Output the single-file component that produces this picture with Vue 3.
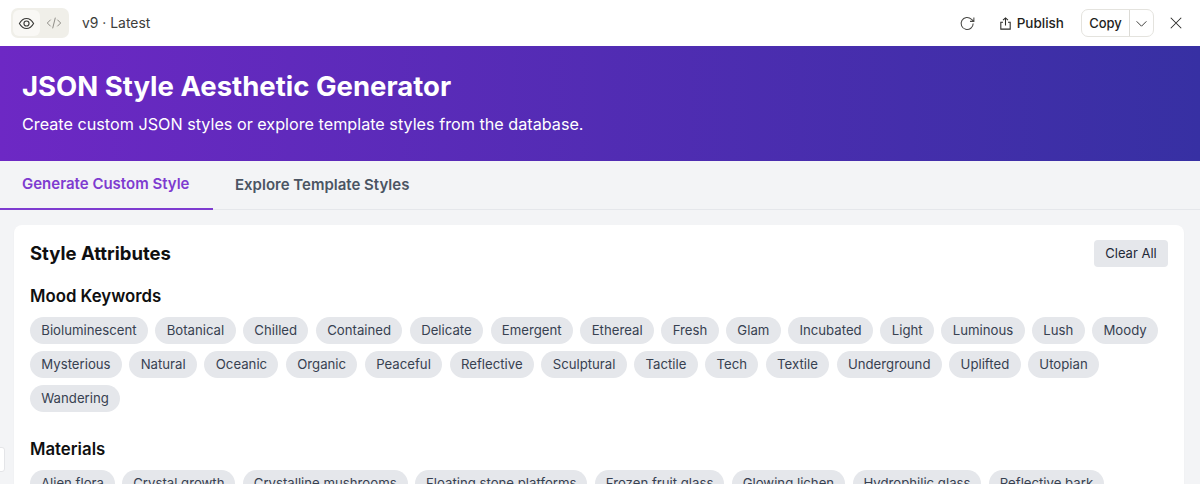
<script setup>
const mood = ['Bioluminescent','Botanical','Chilled','Contained','Delicate','Emergent','Ethereal','Fresh','Glam','Incubated','Light','Luminous','Lush','Moody','Mysterious','Natural','Oceanic','Organic','Peaceful','Reflective','Sculptural','Tactile','Tech','Textile','Underground','Uplifted','Utopian','Wandering']
const materials = ['Alien flora','Crystal growth','Crystalline mushrooms','Floating stone platforms','Frozen fruit glass','Glowing lichen','Hydrophilic glass','Reflective bark']
</script>

<template>
  <div class="page">
    <header class="topbar">
      <div class="left">
        <div class="toggle">
          <span class="tbtn active">
            <svg width="17" height="17" viewBox="0 0 24 24" fill="none" stroke="#3a3a38" stroke-width="1.6"><path d="M2 12c2.6-4.6 6-7 10-7s7.400 2.400 10 7c-2.600 4.600-6 7-10 7s-7.400-2.400-10-7z"/><circle cx="12" cy="12" r="3.600"/></svg>
          </span>
          <span class="tbtn">
            <svg width="16" height="16" viewBox="0 0 24 24" fill="none" stroke="#8f8d87" stroke-width="1.500"><path d="M7 7l-5 5 5 5M17 7l5 5-5 5M14 4l-4 16"/></svg>
          </span>
        </div>
        <span class="version">v9 · Latest</span>
      </div>
      <div class="right">
        <svg class="reload" width="17" height="17" viewBox="0 0 24 24" fill="none" stroke="#4a4a47" stroke-width="1.500"><path d="M20 12a8.500 8.500 0 1 1-2.600-6.100L21 9M21 3.500V9h-5.500"/></svg>
        <span class="publish">
          <svg width="15" height="15" viewBox="0 0 24 24" fill="none" stroke="#2b2b29" stroke-width="1.700"><path d="M12 15V3M8 6.500 12 3l4 3.500M8 10H4.500v11h15V10H16"/></svg>
          Publish
        </span>
        <div class="copy">
          <span class="copy-label">Copy</span>
          <span class="copy-arrow">
            <svg width="13" height="13" viewBox="0 0 24 24" fill="none" stroke="#3a3a38" stroke-width="1.800"><path d="M3 8l9 9 9-9"/></svg>
          </span>
        </div>
        <svg class="close" width="14" height="14" viewBox="0 0 24 24" fill="none" stroke="#2b2b29" stroke-width="1.800"><path d="M3 3l18 18M21 3 3 21"/></svg>
      </div>
    </header>

    <section class="hero">
      <h1>JSON Style Aesthetic Generator</h1>
      <p>Create custom JSON styles or explore template styles from the database.</p>
    </section>

    <nav class="tabs">
      <span class="tab on">Generate Custom Style</span>
      <span class="tab">Explore Template Styles</span>
    </nav>

    <main class="content">
      <div class="card">
        <div class="card-head">
          <h2>Style Attributes</h2>
          <button class="clear">Clear All</button>
        </div>
        <h3>Mood Keywords</h3>
        <div class="chips">
          <span v-for="c in mood" :key="c" class="chip">{{ c }}</span>
        </div>
        <h3 class="mat">Materials</h3>
        <div class="chips tight">
          <span v-for="c in materials" :key="c" class="chip">{{ c }}</span>
        </div>
      </div>
    </main>
    <div class="edge"></div>
  </div>
</template>

<style>
html, body { margin: 0; height: 484px; overflow: hidden; background: #f3f4f6; }
</style>

<style scoped>
.page { position: relative; width: 1200px; height: 484px; overflow: hidden; font-family: Inter, "Liberation Sans", sans-serif; background: #f3f4f6; }
.topbar { height: 46px; background: #fff; display: flex; align-items: center; justify-content: space-between; padding: 0 16px 0 11px; box-sizing: border-box; }
.left { display: flex; align-items: center; gap: 13px; }
.toggle { display: flex; width: 58px; height: 30px; background: #f0efe9; border-radius: 7px; padding: 2px; box-sizing: border-box; }
.tbtn { width: 27px; display: flex; align-items: center; justify-content: center; border-radius: 6px; }
.tbtn.active { background: #f9f8f5; }
.version { font-size: 13.900px; color: #3d3d3a; }
.right { display: flex; align-items: center; }
.reload { margin-right: 22px; }
.publish { display: flex; align-items: center; gap: 4px; font-size: 13.500px; font-weight: 500; color: #1f1f1d; margin-right: 17px; }
.copy { display: flex; height: 28px; width: 73px; border: 1px solid #e4e3de; border-radius: 7px; box-sizing: border-box; align-items: center; margin-right: 15px; }
.copy-label { width: 47px; text-align: center; font-size: 13px; font-weight: 500; color: #1f1f1d; border-right: 1px solid #dcdbd6; height: 100%; line-height: 26px; }
.copy-arrow { flex: 1; display: flex; align-items: center; justify-content: center; }
.close { margin-right: 1px; }
.hero { height: 115px; box-sizing: border-box; padding: 22px 22px 0; background: linear-gradient(90deg, #6d28c4 0%, #3730a3 100%); color: #fff; }
.hero h1 { margin: 0; font-size: 27.500px; line-height: 36px; font-weight: 700; }
.hero p { margin: 8px 0 0; font-size: 16.200px; line-height: 24px; }
.tabs { height: 49px; display: flex; border-bottom: 1px solid #e5e7eb; box-sizing: border-box; }
.tab { padding: 0 23px 0 22px; font-size: 15px; font-weight: 600; line-height: 48px; color: #4b5563; height: 49px; box-sizing: border-box; }
.tab.on { color: #7e3bd0; border-bottom: 2px solid #7e3bd0; line-height: 46px; width: 213px; }
.content { padding: 15px 16px 0 14px; }
.card { background: #fff; border-radius: 8px; padding: 15px 16px 16px; box-shadow: 0 1px 2px rgba(0,0,0,.04); }
.card-head { display: flex; justify-content: space-between; align-items: center; height: 26px; margin-bottom: 20px; }
h2 { margin: 0; font-size: 18.500px; font-weight: 700; color: #0f0f10; }
h3 { margin: 0 0 11px; font-size: 16.800px; line-height: 20px; font-weight: 600; color: #0f0f10; }
h3.mat { margin-top: 27px; margin-bottom: 11px; }
.clear { border: 0; background: #e5e7eb; color: #1f2937; border-radius: 4px; height: 27px; width: 74px; padding: 0; font: 400 13px Inter, "Liberation Sans", sans-serif; }
.chips { display: flex; flex-wrap: wrap; gap: 7px 7.500px; }
.chip { height: 27px; line-height: 27px; padding: 0 11.300px; border-radius: 14px; background: #e5e7eb; color: #374151; font-size: 13.200px; white-space: nowrap; }
.tight .chip { padding: 0 10.900px; }
.edge { position: absolute; left: -4px; top: 447px; width: 7px; height: 23px; background: #fff; border: 1px solid #e4e5e8; border-radius: 3px; }
</style>
